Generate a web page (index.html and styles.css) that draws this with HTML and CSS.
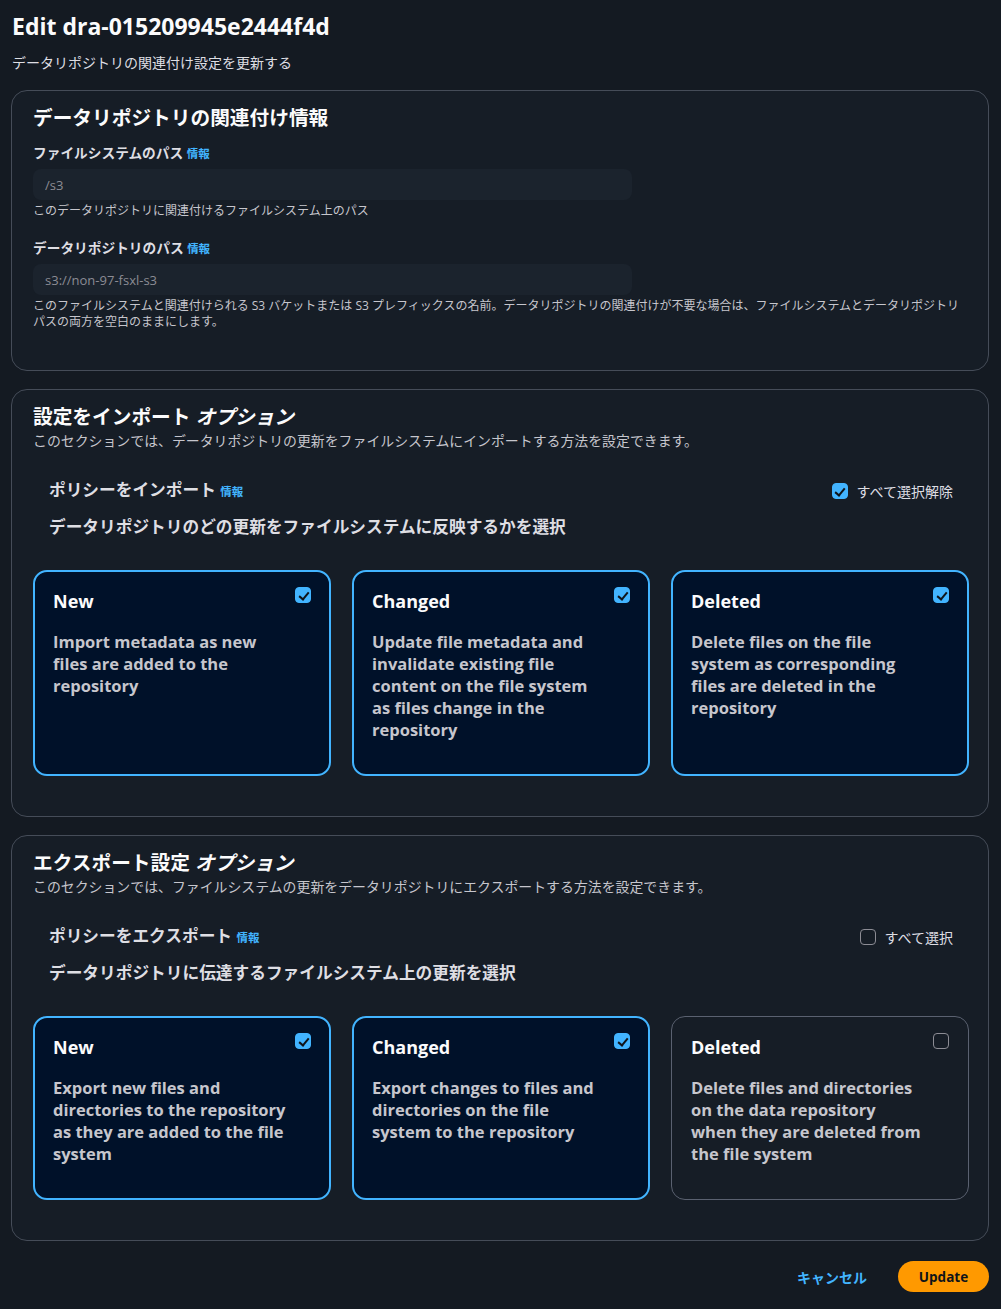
FILE: index.html
```html
<!DOCTYPE html>
<html lang="ja">
<head>
    <meta charset="UTF-8">
    <meta name="viewport" content="width=device-width, initial-scale=1.0">
    <title>Edit dra-015209945e2444f4d</title>
    <link rel="stylesheet" href="styles.css">
</head>
<body>
    <div class="page">
        <!-- Header -->
        <header class="page-header">
            <h1>Edit dra-015209945e2444f4d</h1>
            <p class="page-desc">データリポジトリの関連付け設定を更新する</p>
        </header>

        <!-- Association info -->
        <section class="box">
            <h2 class="box-title">データリポジトリの関連付け情報</h2>

            <div class="field">
                <label class="field-label">ファイルシステムのパス <a class="info" href="#">情報</a></label>
                <input class="field-input" type="text" placeholder="/s3" disabled>
                <p class="field-hint">このデータリポジトリに関連付けるファイルシステム上のパス</p>
            </div>

            <div class="field">
                <label class="field-label">データリポジトリのパス <a class="info" href="#">情報</a></label>
                <input class="field-input" type="text" placeholder="s3://non-97-fsxl-s3" disabled>
                <p class="field-hint">このファイルシステムと関連付けられる S3 バケットまたは S3 プレフィックスの名前。データリポジトリの関連付けが不要な場合は、ファイルシステムとデータリポジトリパスの両方を空白のままにします。</p>
            </div>
        </section>

        <!-- Import -->
        <section class="box">
            <h2 class="box-title">設定をインポート <i>オプション</i></h2>
            <p class="box-desc">このセクションでは、データリポジトリの更新をファイルシステムにインポートする方法を設定できます。</p>

            <div class="policy">
                <div class="policy-head">
                    <span class="policy-title">ポリシーをインポート <a class="info" href="#">情報</a></span>
                    <label class="select-all"><span class="check on"></span>すべて選択解除</label>
                </div>
                <h3 class="policy-sub">データリポジトリのどの更新をファイルシステムに反映するかを選択</h3>
            </div>

            <div class="tiles">
                <div class="tile selected">
                    <div class="tile-top"><span class="tile-name">New</span><span class="check on"></span></div>
                    <p class="tile-text">Import metadata as new files are added to the repository</p>
                </div>
                <div class="tile selected">
                    <div class="tile-top"><span class="tile-name">Changed</span><span class="check on"></span></div>
                    <p class="tile-text">Update file metadata and invalidate existing file content on the file system as&nbsp;files change in the repository</p>
                </div>
                <div class="tile selected">
                    <div class="tile-top"><span class="tile-name">Deleted</span><span class="check on"></span></div>
                    <p class="tile-text">Delete files on the file system&nbsp;as corresponding files are deleted in the repository</p>
                </div>
            </div>
        </section>

        <!-- Export -->
        <section class="box">
            <h2 class="box-title">エクスポート設定 <i>オプション</i></h2>
            <p class="box-desc">このセクションでは、ファイルシステムの更新をデータリポジトリにエクスポートする方法を設定できます。</p>

            <div class="policy">
                <div class="policy-head">
                    <span class="policy-title">ポリシーをエクスポート <a class="info" href="#">情報</a></span>
                    <label class="select-all"><span class="check"></span>すべて選択</label>
                </div>
                <h3 class="policy-sub">データリポジトリに伝達するファイルシステム上の更新を選択</h3>
            </div>

            <div class="tiles">
                <div class="tile selected">
                    <div class="tile-top"><span class="tile-name">New</span><span class="check on"></span></div>
                    <p class="tile-text">Export new files and directories to the repository as they are added to the file system</p>
                </div>
                <div class="tile selected">
                    <div class="tile-top"><span class="tile-name">Changed</span><span class="check on"></span></div>
                    <p class="tile-text">Export changes to files and directories on the file system&nbsp;to the repository</p>
                </div>
                <div class="tile">
                    <div class="tile-top"><span class="tile-name">Deleted</span><span class="check"></span></div>
                    <p class="tile-text">Delete files and directories on the data repository when&nbsp;they are deleted from the file system</p>
                </div>
            </div>
        </section>

        <!-- Actions -->
        <footer class="actions">
            <a class="btn-link" href="#">キャンセル</a>
            <button class="btn-primary" type="button">Update</button>
        </footer>
    </div>
</body>
</html>
```

FILE: styles.css
```css
/* Global */
* {
    margin: 0;
    padding: 0;
    box-sizing: border-box;
}
body {
    font-family: "Open Sans", "Noto Sans CJK JP", sans-serif;
    background: #141a22;
    color: #dedee3;
}
.page {
    padding: 11px 12px 0 11px;
}
a {
    text-decoration: none;
}

/* Header */
.page-header h1 {
    font-size: 23px;
    line-height: 30px;
    font-weight: 700;
    color: #fbfbfc;
    padding-left: 1px;
}
.page-desc {
    margin-top: 14px;
    font-size: 14px;
    line-height: 16px;
    color: #dedee3;
    padding-left: 1px;
}

/* Containers */
.box {
    margin-top: 18px;
    background: #161d26;
    border: 1px solid #454c58;
    border-radius: 16px;
    padding: 15px 19px 40px 21px;
}
.page-header + .box {
    margin-top: 19px;
}
.box-title {
    font-size: 19.7px;
    line-height: 24px;
    font-weight: 700;
    color: #fbfbfc;
}
.box-title i {
    font-style: italic;
}
.box-desc {
    margin-top: 4px;
    font-size: 13.9px;
    line-height: 16px;
    color: #c6c6cd;
}

/* Fields */
.field {
    margin-top: 14px;
}
.field + .field {
    margin-top: 20px;
}
.field-label {
    display: block;
    font-size: 13.7px;
    line-height: 18px;
    font-weight: 700;
    color: #dedee3;
}
.info {
    font-size: 11.5px;
    font-weight: 700;
    color: #42b4ff;
}
.field-input {
    display: block;
    margin-top: 6px;
    width: 599px;
    height: 31px;
    border: none;
    border-radius: 8px;
    background: #1b232d;
    padding: 0 12px;
    font-family: inherit;
    font-size: 13px;
}
.field-input::placeholder {
    color: #8c8c94;
}
.field-hint {
    margin-top: 3px;
    font-size: 12px;
    line-height: 16px;
    color: #c6c6cd;
}

/* Policy header */
.policy {
    padding: 0 16px;
    margin-top: 31px;
}
.policy-head {
    display: flex;
    justify-content: space-between;
    align-items: center;
}
.policy-title {
    font-size: 16.7px;
    line-height: 20px;
    font-weight: 700;
    color: #dedee3;
}
.select-all {
    display: flex;
    align-items: center;
    gap: 9px;
    font-size: 14px;
    color: #dedee3;
}
.policy-sub {
    margin-top: 14px;
    font-size: 16.7px;
    line-height: 22px;
    font-weight: 700;
    color: #dedee3;
}

/* Checkboxes */
.check {
    position: relative;
    display: inline-block;
    width: 16px;
    height: 16px;
    border: 1px solid #8c8c94;
    border-radius: 4px;
    flex-shrink: 0;
}
.check.on {
    background: #42b4ff;
    border-color: #42b4ff;
}
.check.on:after {
    content: "";
    position: absolute;
    left: 4.5px;
    top: 1.5px;
    width: 4px;
    height: 8px;
    border-right: 2px solid #0f141a;
    border-bottom: 2px solid #0f141a;
    transform: rotate(40deg);
}

/* Tiles */
.tiles {
    display: grid;
    grid-template-columns: repeat(3, 1fr);
    gap: 21px;
    margin-top: 32px;
}
.tile {
    border: 1px solid #5a6170;
    border-radius: 14px;
    padding: 19px 19px 33px;
    background: #161d26;
}
.tile.selected {
    border: 2px solid #42b4ff;
    background: #001129;
    padding: 18px 18px 33px;
}
.tile-top {
    display: flex;
    justify-content: space-between;
    align-items: flex-start;
}
.tile-top .check {
    margin-top: -3px;
}
.tile-name {
    font-size: 18px;
    line-height: 22px;
    font-weight: 700;
    color: #fbfbfc;
}
.tile-text {
    margin-top: 19px;
    max-width: 235px;
    font-size: 16.5px;
    line-height: 22px;
    font-weight: 700;
    color: #c6c6cd;
}

/* Footer actions */
.actions {
    display: flex;
    justify-content: flex-end;
    align-items: center;
    gap: 31px;
    padding: 20px 0 18px;
}
.btn-link {
    font-size: 14px;
    font-weight: 700;
    color: #42b4ff;
}
.btn-primary {
    width: 91px;
    height: 31px;
    border: none;
    border-radius: 16px;
    background: #ff9900;
    color: #0f141a;
    font-family: inherit;
    font-size: 13.5px;
    font-weight: 700;
}
```
